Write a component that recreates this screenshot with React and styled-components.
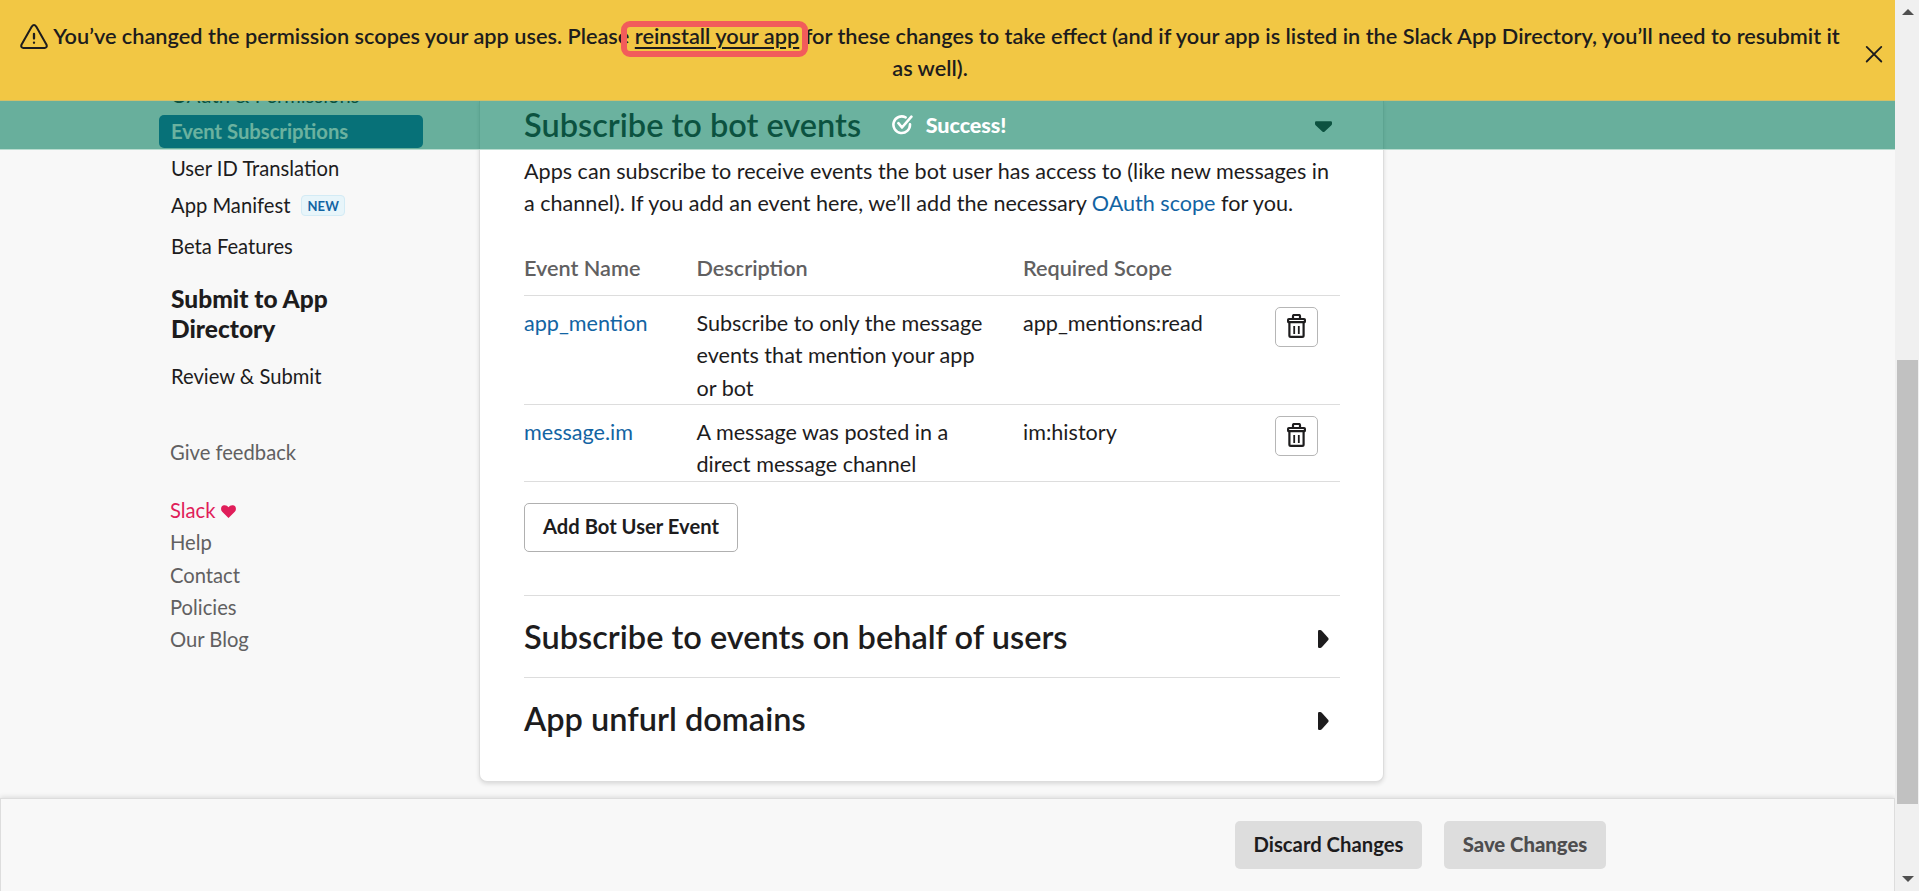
import React from "react";
import styled, { createGlobalStyle, css } from "styled-components";

const Global = createGlobalStyle`
  * { box-sizing: border-box; }
  body { margin: 0; background: #f8f8f8; color: #1d1c1d; font: 400 20.2px/32px Lato, "Noto Sans", sans-serif; overflow: hidden; }
`;
const Window = styled.div`display: flex; width: 1919px; height: 891px; overflow: hidden;`;
const Page = styled.div`position: relative; display: flex; flex-direction: column; width: 1895px; height: 891px; overflow: hidden;`;

const Banner = styled.header`
  position: relative; z-index: 4; flex: none; height: 101px; padding: 20px 50px 0 15px;
  background: #f2c744; border-bottom: 1px solid #d3c067; text-align: center; font-weight: 600; font-size: 21.73px;
  p { margin: 0; }
`;
const WarnIcon = styled.svg`width: 28px; height: 25px; vertical-align: -5px; margin-right: 5px;`;
const ReinstallLink = styled.a`
  position: relative; color: inherit; text-decoration: underline; text-underline-offset: 3px; text-decoration-thickness: 1.5px;
`;
const Highlight = styled.span`
  position: absolute; left: -14px; right: -9px; top: -2px; height: 36px; border: 6px solid #f25c5b; border-radius: 9px;
`;
const CloseButton = styled.button`
  position: absolute; right: 12px; top: 45px; padding: 0; border: 0; background: none; width: 18px; height: 18px;
  svg { display: block; }
`;

const Toast = styled.div`
  position: absolute; top: 101px; left: 0; right: 0; height: 49px; z-index: 3; display: flex; align-items: center; justify-content: center; gap: 13px; padding-left: 3px;
  background: rgba(0, 122, 90, 0.58); border-bottom: 1px solid #b9dccf; color: #fff; font-size: 21.6px; font-weight: 900; letter-spacing: -0.1px;
`;
const Body = styled.main`flex: none; display: flex; height: 697px;`;

const Sidebar = styled.nav`width: 479px; flex: none; padding-left: 159px;`;
const NavList = styled.div`margin-top: -22px;`;
const NavItem = styled.div`
  display: flex; align-items: center; width: 264px; height: 33px; padding-left: 12px; margin-bottom: ${p => p.$gap ?? 4}px; line-height: 33px;
  ${p => p.$active && css`background: #1264a3; color: #fff; border-radius: 5px; font-weight: 700;`}
`;
const NewBadge = styled.span`
  margin-left: 11px; height: 21px; padding: 0 5px; border: 1px solid #d3ebf5; border-radius: 4px; background: #e8f5fa; color: #1264a3; font: 700 13px/20px Lato, sans-serif; letter-spacing: .2px;
`;
const NavHeading = styled.h2`margin: 21px 0 16px 12px; width: 200px; font-size: 24.5px; font-weight: 900; line-height: 30px;`;
const FooterLinks = styled.div`display: flex; flex-direction: column; margin: ${p => p.$top}px 0 0 11px; color: #616061;`;
const FooterLink = styled.a`
  line-height: 32.2px; color: ${p => (p.$brand ? "#e01e5a" : "inherit")};
  svg { margin-left: 6px; }
`;

const Card = styled.section`
  width: 905px; height: 681px; flex: none; padding: 0 43px 0 44px; background: #fff; border: 1px solid #ddd; border-top: 0; border-radius: 0 0 8px 8px; box-shadow: 0 2px 4px rgba(0,0,0,.12); font-size: 21.58px;
`;
const Section = styled.div`
  display: flex; align-items: center; justify-content: space-between; height: 82px; padding-right: 11px; border-top: 1px solid #ddd;
  svg { margin-top: 4px; }
`;
const OpenSection = styled(Section)`
  height: 54px; padding-right: 8px; border-top: 0;
  h3 { margin-bottom: 6px; }
  svg { margin: 0 0 3px; }
`;
const Title = styled.h3`margin: 0; font-size: 32.5px; line-height: 40px; font-weight: 600;`;
const Intro = styled.p`margin: 0; height: 65px;`;
const Link = styled.a`color: #1264a3;`;
const Row = styled.div`
  display: grid; grid-template-columns: 172.5px 326.5px 251.5px 1fr; height: ${p => p.$h}px; padding-top: 11px; border-bottom: 1px solid #ddd;
  ${p => p.$head && css`padding: 16px 0 0; margin-top: 16px; color: #616061; font-weight: 600; font-size: 21.65px;`}
`;
const Desc = styled.div`width: 300px; line-height: 32.3px;`;
const DeleteButton = styled.button`
  display: grid; place-items: center; width: 43px; height: 40px; padding: 0 0 2px; background: #fff; border: 1px solid #b6b6b6; border-radius: 5px; color: #1d1c1d;
`;
const AddButton = styled.button`
  margin: 21px 0 43px; width: 214px; height: 49px; padding: 0 0 3px; background: #fff; border: 1px solid #b0b0b0; border-radius: 5px; color: #1d1c1d; font: 700 20.2px/30px Lato, sans-serif; display: block;
`;

const ActionBar = styled.footer`
  flex: none; position: relative; z-index: 2; display: flex; gap: 22px; height: 93px; padding: 22px 0 0 1234px; background: #f8f8f8; border: 1px solid #ddd; border-bottom: 0; box-shadow: 0 -1px 5px rgba(0,0,0,.12);
`;
const ActionButton = styled.button`
  width: ${p => p.$w}px; height: 48px; padding: 0 0 3px; border: 0; border-radius: 5px; background: #ddd; color: ${p => (p.$dim ? "#4e4d4e" : "#1d1c1d")}; font: ${p => (p.$dim ? 900 : 700)} 20.3px/30px Lato, sans-serif;
`;

const Scrollbar = styled.div`
  width: 24px; display: flex; flex-direction: column; align-items: center; background: #f0f0f0; padding: 9px 0 9px 1px;
`;
const Thumb = styled.div`width: 21px; height: 444px; margin: 345px 0 auto; background: #c1c1c1;`;

const Trash = () => (
  <svg width="19" height="24" viewBox="0 0 19 24" fill="none" stroke="currentColor" strokeWidth="2.2">
    <path d="M6 5V2.2Q6 1 7.2 1h4.6Q13 1 13 2.2V5" />
    <rect x="1.1" y="5" width="16.8" height="3.2" rx=".8" />
    <path d="M2.4 8.5v13q0 1.4 1.4 1.4h11.4q1.4 0 1.4-1.4v-13" />
    <path d="M7.2 12v8M11.8 12v8" strokeWidth="1.8" />
  </svg>
);
const RightCaret = () => (
  <svg width="11" height="18" viewBox="0 0 11 18" fill="#1d1c1d"><path d="M0 1.2Q0 0 1.2 0H2.2Q3.2 0 4 .9L10.3 8Q11 9 10.3 10L4 17.1Q3.2 18 2.2 18H1.2Q0 18 0 16.8Z" /></svg>
);
const DownCaret = () => (
  <svg width="17" height="12" viewBox="0 0 18 12" fill="#1d1c1d"><path d="M1.2 0Q0 0 0 1.2V2.6Q0 3.6 .9 4.4L8 11Q9 11.8 10 11L17.1 4.4Q18 3.6 18 2.6V1.2Q18 0 16.8 0Z" /></svg>
);

export default function App() {
  return (
    <Window>
      <Global />
      <Page>
        <Banner>
          <p>
            <WarnIcon viewBox="0 0 28 25" fill="none" stroke="#1d1c1d" strokeWidth="2" strokeLinecap="round" strokeLinejoin="round">
              <path d="M11.8 2.6Q14 -.4 16.2 2.6L26.4 20.4Q27.6 23.7 24.8 23.9H3.2Q.4 23.7 1.6 20.4Z" />
              <path d="M14 9.8v4.7M14 18.6v.2" strokeWidth="2.3" />
            </WarnIcon>
            You’ve changed the permission scopes your app uses. Please <ReinstallLink>reinstall your app<Highlight /></ReinstallLink> for these changes to take effect (and if your app is listed in the Slack App Directory, you’ll need to resubmit it as well).
          </p>
          <CloseButton aria-label="Dismiss">
            <svg width="18" height="18" viewBox="0 0 18 18" stroke="#1d1c1d" strokeWidth="1.8" strokeLinecap="round"><path d="M1.7 1.9l14.6 14.6M16.3 1.9L1.7 16.5" /></svg>
          </CloseButton>
        </Banner>
        <Toast>
          <svg width="21" height="20" viewBox="0 0 21 20" fill="none" stroke="#fff" strokeWidth="2.6" strokeLinecap="round" strokeLinejoin="round">
            <path d="M13.6 2.4A8.3 8.3 0 1 0 18 9.4M6.4 8.2l3.6 4.3L19.4 1.7" />
          </svg>
          Success!
        </Toast>
        <Body>
          <Sidebar>
            <NavList>
              <NavItem $gap={3}>OAuth &amp; Permissions</NavItem>
              <NavItem $active>Event Subscriptions</NavItem>
              <NavItem>User ID Translation</NavItem>
              <NavItem $gap={8}>App Manifest<NewBadge>NEW</NewBadge></NavItem>
              <NavItem $gap={0}>Beta Features</NavItem>
            </NavList>
            <NavHeading>Submit to App Directory</NavHeading>
            <NavItem $gap={0}>Review &amp; Submit</NavItem>
            <FooterLinks $top={43}><FooterLink>Give feedback</FooterLink></FooterLinks>
            <FooterLinks $top={26}>
              <FooterLink $brand>Slack<svg width="15" height="13" viewBox="0 0 15 13" fill="#e01e5a"><path d="M7.5 13L1.2 6.8C-.6 4.8-.2 1.7 2 .6 4-.4 6.2.3 7.5 2.2 8.8.3 11-.4 13 .6c2.2 1.1 2.6 4.2.8 6.2z" /></svg></FooterLink>
              <FooterLink>Help</FooterLink>
              <FooterLink>Contact</FooterLink>
              <FooterLink>Policies</FooterLink>
              <FooterLink>Our Blog</FooterLink>
            </FooterLinks>
          </Sidebar>
          <Card>
            <OpenSection><Title>Subscribe to bot events</Title><DownCaret /></OpenSection>
            <Intro>Apps can subscribe to receive events the bot user has access to (like new messages in a channel). If you add an event here, we’ll add the necessary <Link>OAuth scope</Link> for you.</Intro>
            <Row $head $h={60}><span>Event Name</span><span>Description</span><span>Required Scope</span></Row>
            <Row $h={109}><Link>app_mention</Link><Desc>Subscribe to only the message events that mention your app or bot</Desc><span>app_mentions:read</span><DeleteButton aria-label="Delete"><Trash /></DeleteButton></Row>
            <Row $h={77}><Link>message.im</Link><Desc>A message was posted in a direct message channel</Desc><span>im:history</span><DeleteButton aria-label="Delete"><Trash /></DeleteButton></Row>
            <AddButton>Add Bot User Event</AddButton>
            <Section><Title>Subscribe to events on behalf of users</Title><RightCaret /></Section>
            <Section><Title>App unfurl domains</Title><RightCaret /></Section>
          </Card>
        </Body>
        <ActionBar>
          <ActionButton $w={187}>Discard Changes</ActionButton>
          <ActionButton $w={162} $dim>Save Changes</ActionButton>
        </ActionBar>
      </Page>
      <Scrollbar>
        <svg width="12" height="6" viewBox="0 0 12 6" fill="#505050"><path d="M6 0l6 6H0z" /></svg>
        <Thumb />
        <svg width="12" height="6" viewBox="0 0 12 6" fill="#505050"><path d="M6 6l6-6H0z" /></svg>
      </Scrollbar>
    </Window>
  );
}
